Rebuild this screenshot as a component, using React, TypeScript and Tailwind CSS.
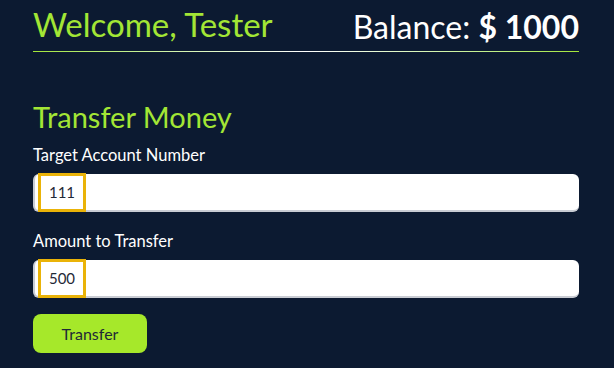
import { useState } from "react";

const font = { fontFamily: "Lato, 'Noto Sans', sans-serif" };

const Field = ({ label, value }: { label: string; value: string }) => (
  <div className="flex flex-col">
    <label className="text-[16.5px] text-white leading-[20px] mb-[9px]">{label}</label>
    <div className="relative h-[38px] rounded-[6px] bg-white border-l-2 border-b-2 border-[#c9ccd3]">
      <span className="absolute left-[3px] top-[-1px] h-[39px] w-[48px] border-[3px] border-[#eab308] bg-white flex items-center justify-center text-[15px] text-[#1f2937]">
        {value}
      </span>
    </div>
  </div>
);

export default function App() {
  const [balance] = useState(1000);

  return (
    <div className="min-h-screen w-full bg-[#0c1a31]" style={font}>
      <div className="ml-[33px] w-[546px]">
        <header className="flex items-end justify-between h-[51px] pb-[8px]">
          <h1 className="text-[33px] text-[#a3e635] leading-none mb-[2px]">Welcome, Tester</h1>
          <div className="text-[32px] text-white leading-none">
            Balance: <span className="font-bold">$ {balance}</span>
          </div>
        </header>
        <div className="h-px bg-gradient-to-r from-[#a3e635] via-white to-[#a3e635]" />

        <h2 className="mt-[50px] text-[29px] text-[#a3e635] leading-none">Transfer Money</h2>

        <div className="mt-[14px] flex flex-col gap-[19px]">
          <Field label="Target Account Number" value="111" />
          <Field label="Amount to Transfer" value="500" />
        </div>

        <button className="mt-[16px] h-[39px] w-[114px] rounded-[8px] bg-[#a6e82a] text-[16px] text-[#1f2937]">
          Transfer
        </button>
      </div>
    </div>
  );
}
